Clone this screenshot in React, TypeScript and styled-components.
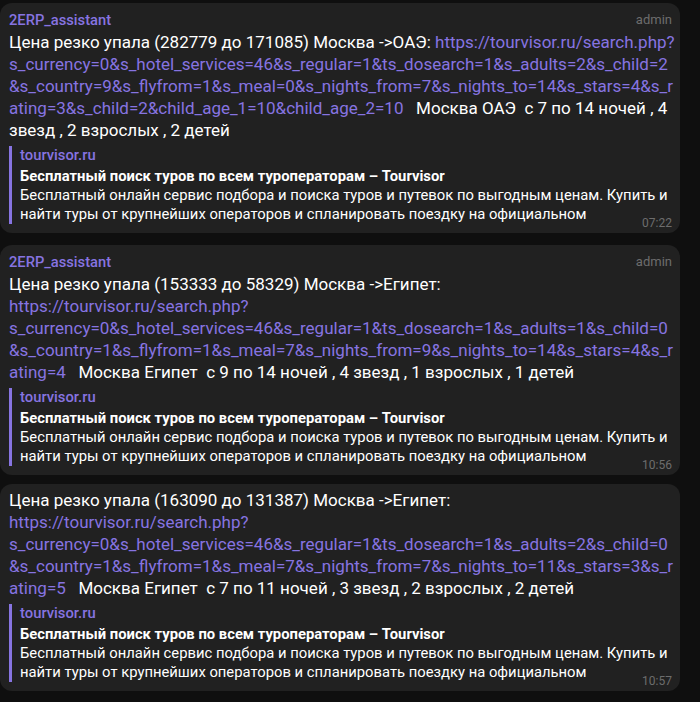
import styled, { createGlobalStyle } from 'styled-components';

const GlobalStyle = createGlobalStyle`
	html, body {
		margin: 0;
		background: #0f0f0f;
	}
	body {
		font-family: Roboto, "Noto Sans", "Liberation Sans", sans-serif;
		-webkit-font-smoothing: antialiased;
	}
`;

type Preview = {
	site: string;
	title: string;
	desc: string[];
};

type Message = {
	author?: string;
	lines: { text?: string; link?: string; after?: string }[];
	time: string;
	gap: number;
};

const preview: Preview = {
	site: 'tourvisor.ru',
	title: 'Бесплатный поиск туров по всем туроператорам – Tourvisor',
	desc: [
		'Бесплатный онлайн сервис подбора и поиска туров и путевок по выгодным ценам. Купить и',
		'найти туры от крупнейших операторов и спланировать поездку на официальном',
	],
};

const messages: Message[] = [
	{
		author: '2ERP_assistant',
		gap: 3,
		time: '07:22',
		lines: [
			{ text: 'Цена резко упала (282779 до 171085) Москва ->ОАЭ: ', link: 'https://tourvisor.ru/search.php?' },
			{ link: 's_currency=0&s_hotel_services=46&s_regular=1&ts_dosearch=1&s_adults=2&s_child=2' },
			{ link: '&s_country=9&s_flyfrom=1&s_meal=0&s_nights_from=7&s_nights_to=14&s_stars=4&s_r' },
			{ link: 'ating=3&s_child=2&child_age_1=10&child_age_2=10', after: '   Москва ОАЭ  с 7 по 14 ночей , 4' },
			{ text: 'звезд , 2 взрослых , 2 детей' },
		],
	},
	{
		author: '2ERP_assistant',
		gap: 12,
		time: '10:56',
		lines: [
			{ text: 'Цена резко упала (153333 до 58329) Москва ->Египет:' },
			{ link: 'https://tourvisor.ru/search.php?' },
			{ link: 's_currency=0&s_hotel_services=46&s_regular=1&ts_dosearch=1&s_adults=1&s_child=0' },
			{ link: '&s_country=1&s_flyfrom=1&s_meal=7&s_nights_from=9&s_nights_to=14&s_stars=4&s_r' },
			{ link: 'ating=4', after: '   Москва Египет  с 9 по 14 ночей , 4 звезд , 1 взрослых , 1 детей' },
		],
	},
	{
		gap: 9,
		time: '10:57',
		lines: [
			{ text: 'Цена резко упала (163090 до 131387) Москва ->Египет:' },
			{ link: 'https://tourvisor.ru/search.php?' },
			{ link: 's_currency=0&s_hotel_services=46&s_regular=1&ts_dosearch=1&s_adults=2&s_child=0' },
			{ link: '&s_country=1&s_flyfrom=1&s_meal=7&s_nights_from=7&s_nights_to=11&s_stars=3&s_r' },
			{ link: 'ating=5', after: '   Москва Египет  с 7 по 11 ночей , 3 звезд , 2 взрослых , 2 детей' },
		],
	},
];

const App = () => {
	return (
		<>
			<GlobalStyle />
			<Chat>
				{messages.map((m, i) => (
					<Bubble key={i} $gap={m.gap}>
						{m.author && (
							<Header>
								<Author>{m.author}</Author>
								<Role>admin</Role>
							</Header>
						)}
						<Body>
							{m.lines.map((l, j) => (
								<Line key={j}>
									{l.text}
									{l.link && <Link href="#">{l.link}</Link>}
									{l.after}
								</Line>
							))}
						</Body>
						<WebPage>
							<Site>{preview.site}</Site>
							<PageTitle>{preview.title}</PageTitle>
							{preview.desc.map((d, k) => (
								<Desc key={k}>{d}</Desc>
							))}
						</WebPage>
						<Time>{m.time}</Time>
					</Bubble>
				))}
			</Chat>
		</>
	);
};

const Chat = styled.main`
	width: 680px;
	display: flex;
	flex-direction: column;
	padding-bottom: 13px;
`;

const Bubble = styled.section<{ $gap: number }>`
	position: relative;
	margin-top: ${(p) => p.$gap}px;
	background: #212121;
	border-radius: 12px;
	padding: 5px 8px 9px 9px;
	color: #ffffff;
`;

const Header = styled.div`
	display: flex;
	justify-content: space-between;
	align-items: center;
	height: 23px;
`;

const Author = styled.span`
	color: #8774e1;
	font-size: 14.7px;
	font-weight: 500;
`;

const Role = styled.span`
	color: #6d6d6d;
	font-size: 13px;
`;

const Body = styled.div`
	font-size: 17px;
	line-height: 22px;
`;

const Line = styled.div`
	white-space: pre;
`;

const Link = styled.a`
	color: #8774e1;
	text-decoration: none;
`;

const WebPage = styled.div`
	margin-top: 5px;
	padding-left: 8px;
	border-left: 3px solid #8774e1;
	font-size: 14.8px;
`;

const Site = styled.div`
	color: #8774e1;
	font-weight: 500;
	line-height: 18px;
`;

const PageTitle = styled.div`
	margin-top: 2px;
	font-weight: 700;
	line-height: 20px;
	white-space: nowrap;
`;

const Desc = styled.div`
	line-height: 19px;
	white-space: nowrap;
`;

const Time = styled.span`
	position: absolute;
	right: 8px;
	bottom: 3px;
	font-size: 12px;
	line-height: 14px;
	color: #6d6d6d;
`;

export default App;
